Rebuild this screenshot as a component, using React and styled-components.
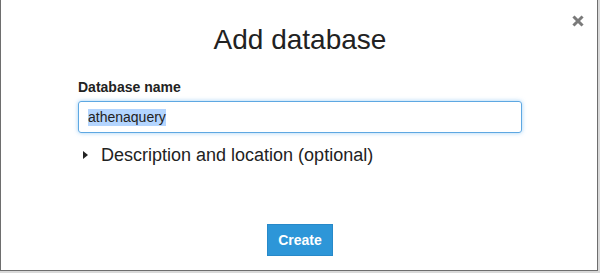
import React from 'react';
import styled, { createGlobalStyle } from 'styled-components';

const GlobalStyle = createGlobalStyle`
  html, body {
    margin: 0;
    padding: 0;
    background: #d9d9d9;
    font-family: "Liberation Sans", Arial, sans-serif;
  }
`;

const Modal = styled.div`
  position: relative;
  box-sizing: border-box;
  width: 598px;
  height: 271px;
  background: #fff;
  border: 1px solid #6e6e6e;
  border-top: none;
  display: flex;
  flex-direction: column;
  padding: 0 75px 14px 77px;
`;

const Close = styled.button`
  position: absolute;
  top: 14px;
  right: 13px;
  width: 13px;
  height: 13px;
  padding: 0;
  border: none;
  background: none;
  display: flex;
  align-items: center;
  justify-content: center;
  cursor: pointer;
`;

const Title = styled.h2`
  margin: 23px 0 0;
  font-size: 28px;
  line-height: 34px;
  font-weight: 400;
  color: #222;
  text-align: center;
`;

const Label = styled.label`
  margin-top: 20px;
  font-size: 14px;
  line-height: 20px;
  font-weight: 700;
  color: #222;
`;

const Field = styled.div`
  box-sizing: border-box;
  margin-top: 4px;
  height: 32px;
  border: 1px solid #5ea8e2;
  border-radius: 3px;
  box-shadow: 0 0 4px rgba(82, 168, 236, 0.55);
  padding: 0 9px;
  display: flex;
  align-items: center;
  font-size: 14px;
  color: #222;
`;

const Selected = styled.span`
  background: #b4d5fe;
  line-height: 17px;
`;

const Toggle = styled.div`
  margin-top: 10px;
  display: flex;
  align-items: center;
  gap: 13px;
  font-size: 18px;
  line-height: 24px;
  color: #222;
  padding-left: 5px;
`;

const Caret = styled.span`
  width: 0;
  height: 0;
  border-top: 4px solid transparent;
  border-bottom: 4px solid transparent;
  border-left: 5px solid #222;
`;

const Footer = styled.div`
  margin-top: auto;
  display: flex;
  justify-content: center;
`;

const Button = styled.button`
  box-sizing: border-box;
  height: 32px;
  padding: 0 10px;
  border: 1px solid #2789c9;
  background: #2d96d8;
  color: #fff;
  font-family: "Liberation Sans", Arial, sans-serif;
  font-size: 14px;
  font-weight: 700;
  border-radius: 0;
  cursor: pointer;
`;

const CloseIcon = () => (
  <svg width="12" height="12" viewBox="0 0 12 12">
    <path d="M2.5 2.5 L9.5 9.5 M9.5 2.5 L2.5 9.5" stroke="#7a7a7a" strokeWidth="3" strokeLinecap="square" />
  </svg>
);

const App = () => {
  return (
    <>
      <GlobalStyle />
      <Modal>
        <Close aria-label="Close"><CloseIcon /></Close>
        <Title>Add database</Title>
        <Label>Database name</Label>
        <Field><Selected>athenaquery</Selected></Field>
        <Toggle><Caret />Description and location (optional)</Toggle>
        <Footer>
          <Button>Create</Button>
        </Footer>
      </Modal>
    </>
  );
};

export default App;
